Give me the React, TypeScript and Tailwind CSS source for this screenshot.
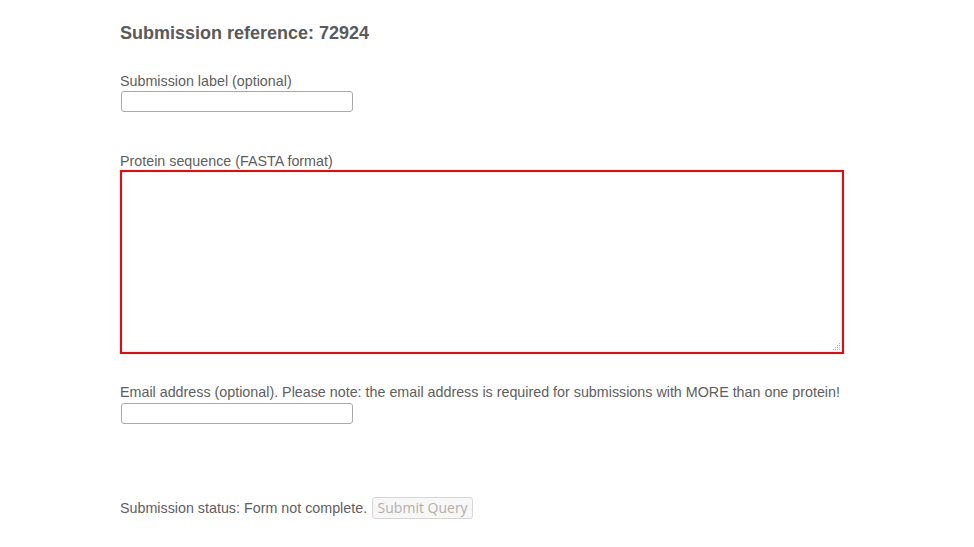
import React from "react";

export default function App() {
  return (
    <div className="min-h-screen w-full bg-white text-[#5e5e5e]" style={{ fontFamily: '"Liberation Sans", Arial, sans-serif' }}>
      <div className="ml-[120px] w-[724px] pt-[22px]">
        <h2 className="text-[18px] font-bold leading-[22px] text-[#5a5a5a]">Submission reference: 72924</h2>

        <div className="mt-[29px] flex flex-col items-start">
          <label className="text-[14.3px] leading-[17px]">Submission label (optional)</label>
          <input
            type="text"
            className="ml-px mt-[1px] h-[21px] w-[232px] rounded-[3px] border border-[#a9a9a9] bg-white outline-none"
          />
        </div>

        <div className="mt-[41px] flex flex-col items-start">
          <label className="text-[14.3px] leading-[17px]">Protein sequence (FASTA format)</label>
          <div className="relative">
            <textarea className="block h-[184px] w-[724px] resize-none border-2 border-[#ff0000] bg-white outline-none" />
            <svg className="pointer-events-none absolute bottom-[3px] right-[3px]" width="9" height="9" viewBox="0 0 9 9">
              <g fill="#b5b5b5">
                <rect x="7" y="1" width="1" height="1" />
                <rect x="5" y="3" width="1" height="1" />
                <rect x="7" y="3" width="1" height="1" />
                <rect x="3" y="5" width="1" height="1" />
                <rect x="5" y="5" width="1" height="1" />
                <rect x="7" y="5" width="1" height="1" />
                <rect x="1" y="7" width="1" height="1" />
                <rect x="3" y="7" width="1" height="1" />
                <rect x="5" y="7" width="1" height="1" />
                <rect x="7" y="7" width="1" height="1" />
              </g>
            </svg>
          </div>
        </div>

        <div className="mt-[30px] flex flex-col items-start">
          <label className="text-[14.3px] leading-[17px]">
            Email address (optional). Please note: the email address is required for submissions with MORE than one protein!
          </label>
          <input
            type="email"
            className="ml-px mt-[2px] h-[21px] w-[232px] rounded-[3px] border border-[#a9a9a9] bg-white outline-none"
          />
        </div>

        <div className="mt-[73px] flex items-center gap-[5px]">
          <span className="text-[14.3px] leading-[17px]">Submission status: Form not complete.</span>
          <button
            disabled
            className="h-[22px] w-[101px] rounded-[3px] border border-[#d6d6d6] bg-[#f7f7f7] text-[14px] leading-[20px] text-[#b5aea7]"
            style={{ fontFamily: '"Open Sans", "DejaVu Sans", sans-serif' }}
          >
            Submit Query
          </button>
        </div>
      </div>
    </div>
  );
}
